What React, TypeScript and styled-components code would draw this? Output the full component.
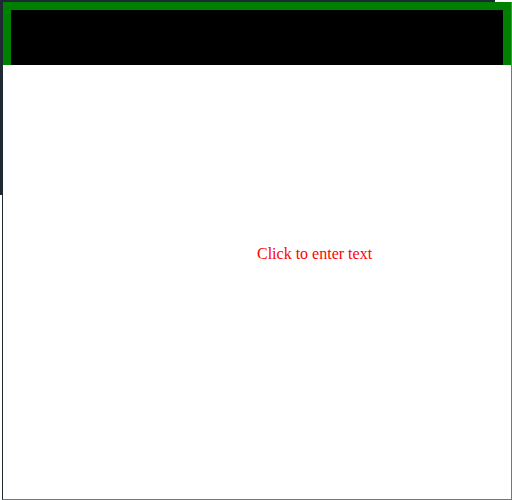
import styled, { createGlobalStyle } from "styled-components";

const GlobalStyle = createGlobalStyle`
  html, body {
    margin: 0;
    padding: 0;
    background: #ffffff;
  }
  * {
    box-sizing: border-box;
  }
`;

// dark slate panel peeking out behind the editor (top-left)
const Page = styled.div`
  width: 512px;
  height: 500px;
  padding: 2px 0 0 2px;
  background: linear-gradient(#1f2933, #1f2933) no-repeat 0 0 / 495px 195px;
`;

const Editor = styled.div`
  display: flex;
  flex-direction: column;
  width: 510px;
  height: 498px;
  background: #ffffff;
  border-left: 1px solid #1f2933;
  border-right: 1px solid #767676;
  border-bottom: 1px solid #767676;
`;

const Header = styled.div`
  flex: none;
  height: 63px;
  background: #000000;
  border: 8px solid #008000;
  border-bottom: none;
`;

const Body = styled.div`
  flex: 1;
  padding: 180px 0 0 50%;
`;

const Placeholder = styled.div`
  color: #ff0000;
  font-family: "Liberation Serif", "Times New Roman", serif;
  font-size: 16px;
  cursor: text;
`;

export default function App() {
  return (
    <>
      <GlobalStyle />
      <Page>
        <Editor>
          <Header />
          <Body>
            <Placeholder>Click to enter text</Placeholder>
          </Body>
        </Editor>
      </Page>
    </>
  );
}
